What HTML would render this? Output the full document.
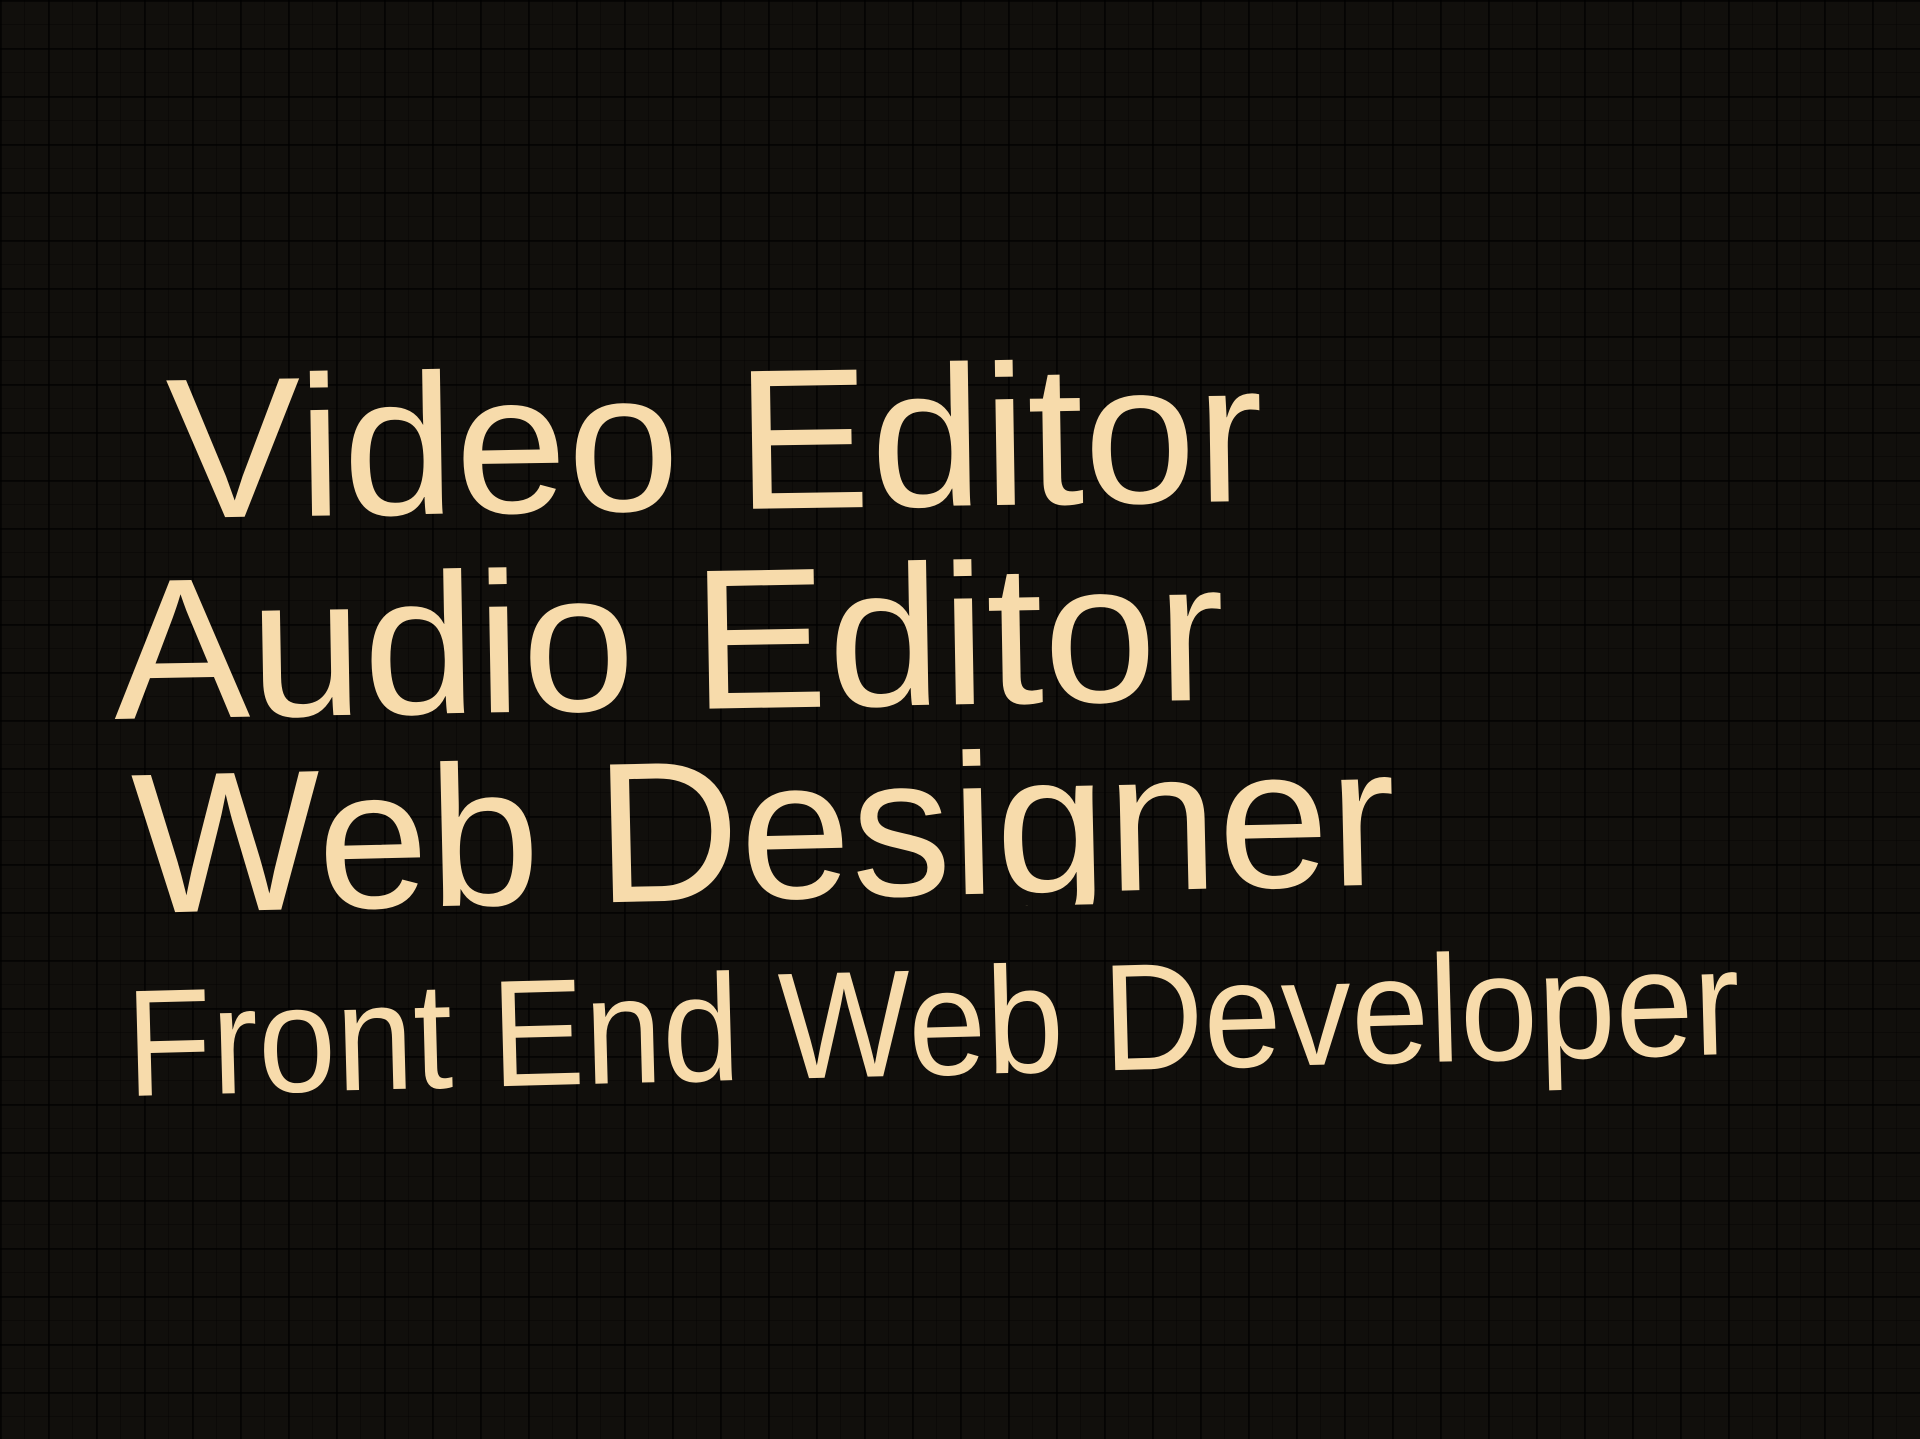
<!DOCTYPE html>
<html><head><meta charset="utf-8"><style>
html,body{margin:0;padding:0}
body{width:1920px;height:1439px;overflow:hidden;position:relative;
background-color:#110f0c;
background-image:
linear-gradient(to right, rgba(0,0,0,0.6) 2px, transparent 2px),
linear-gradient(to bottom, rgba(0,0,0,0.6) 2px, transparent 2px),
linear-gradient(to right, rgba(0,0,0,0.3) 1px, transparent 1px),
linear-gradient(to bottom, rgba(0,0,0,0.3) 1px, transparent 1px);
background-size:48px 48px,48px 48px,24px 24px,24px 24px;
font-family:"Liberation Sans",Arial,sans-serif;}
.t{position:absolute;color:#f7dbab;white-space:nowrap;line-height:1;transform-origin:0 100%;}
</style></head><body>
<div class="t" style="left:168px;top:350px;font-size:200px;transform:rotate(-0.9deg) scaleX(1.01);">Video Editor</div>
<div class="t" style="left:115px;top:551px;font-size:200px;transform:rotate(-1deg) scaleX(1.02);">Audio Editor</div>
<div class="t" style="left:134px;top:745px;font-size:200px;height:181px;overflow:hidden;transform:rotate(-1.3deg);">Web Designer</div>
<div class="t" style="left:128px;top:968px;font-size:152px;transform:rotate(-1.5deg) scaleX(0.92);">Front End Web Developer</div>
</body></html>
